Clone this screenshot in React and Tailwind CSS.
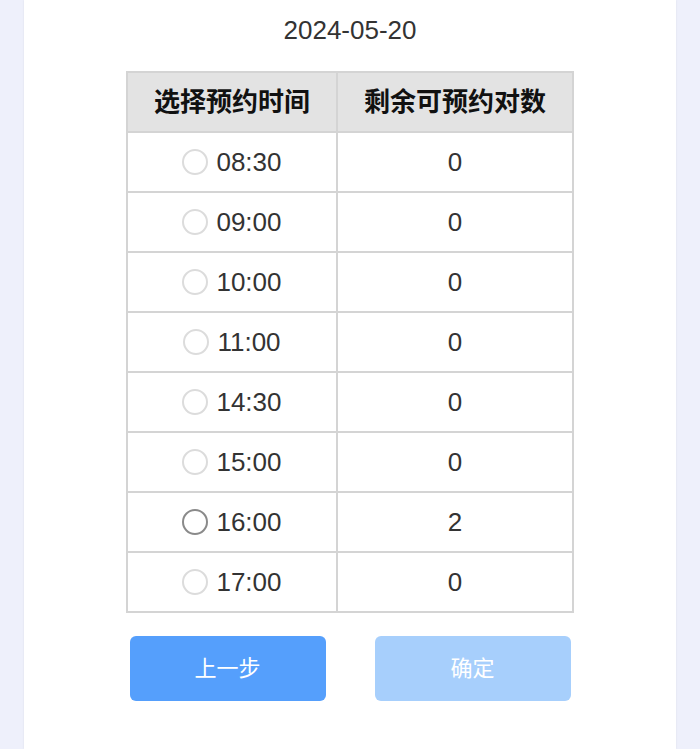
const slots = [
  { time: "08:30", left: 0 },
  { time: "09:00", left: 0 },
  { time: "10:00", left: 0 },
  { time: "11:00", left: 0 },
  { time: "14:30", left: 0 },
  { time: "15:00", left: 0 },
  { time: "16:00", left: 2 },
  { time: "17:00", left: 0 },
];

export default function App() {
  return (
    <div
      className="min-h-[749px] bg-[#eef0fb] px-[24px]"
      style={{ fontFamily: '"Liberation Sans", "Noto Sans CJK SC", sans-serif' }}
    >
      <div className="min-h-[749px] bg-white shadow-[0_0_2px_rgba(0,0,0,0.08)] pt-[14px]">
        <div className="text-center text-[26px] leading-[32px] text-[#333]">2024-05-20</div>

        <div className="mx-auto mt-[25px] grid w-[448px] grid-cols-[210px_236px] border-l-2 border-t-2 border-[#d4d4d4]">
          <div className="flex h-[60px] items-center justify-center border-b-2 border-r-2 border-[#d4d4d4] bg-[#e3e3e3] text-[26px] font-bold text-[#111]">
            选择预约时间
          </div>
          <div className="flex h-[60px] items-center justify-center border-b-2 border-r-2 border-[#d4d4d4] bg-[#e3e3e3] text-[26px] font-bold text-[#111]">
            剩余可预约对数
          </div>
          {slots.map((slot) => (
            <div key={slot.time} className="contents">
              <div className="flex h-[60px] items-center justify-center gap-[8px] border-b-2 border-r-2 border-[#d4d4d4] text-[26px] text-[#333]">
                <span
                  className={
                    slot.left > 0
                      ? "h-[26px] w-[26px] rounded-full border-2 border-[#8a8a8a]"
                      : "h-[26px] w-[26px] rounded-full border-2 border-[#dcdcdc]"
                  }
                />
                <span>{slot.time}</span>
              </div>
              <div className="flex h-[60px] items-center justify-center border-b-2 border-r-2 border-[#d4d4d4] text-[26px] text-[#333]">
                {slot.left}
              </div>
            </div>
          ))}
        </div>

        <div className="mt-[23px] flex justify-center gap-[49px]">
          <button className="h-[65px] w-[196px] rounded-[6px] bg-[#559ffc] text-[22px] text-white">
            上一步
          </button>
          <button className="h-[65px] w-[196px] rounded-[6px] bg-[#a7cffc] text-[22px] text-white">
            确定
          </button>
        </div>
      </div>
    </div>
  );
}
